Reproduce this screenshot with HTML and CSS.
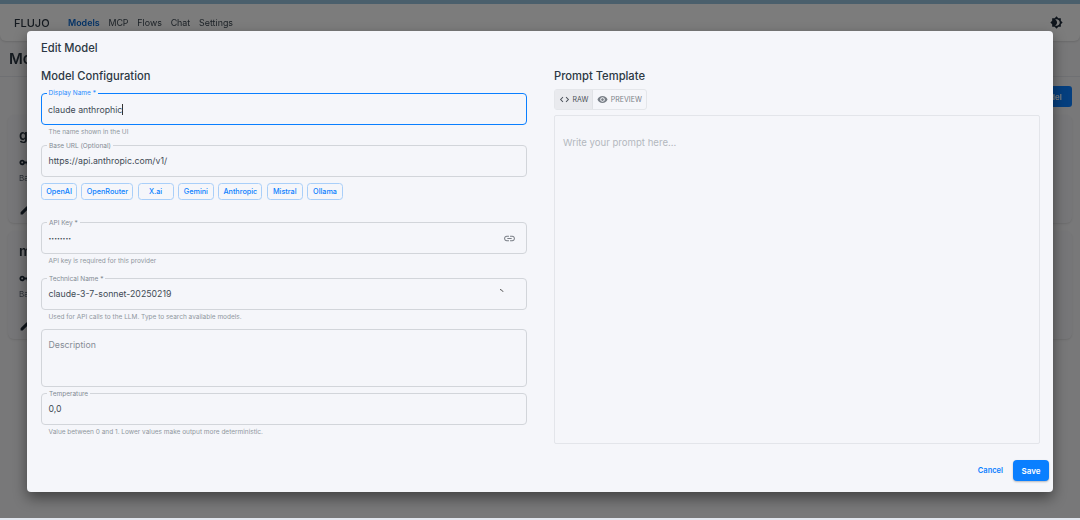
FILE: index.html
```html
<!DOCTYPE html>
<html lang="en">
<head>
<meta charset="utf-8">
<title>Edit Model</title>
<link rel="stylesheet" href="styles.css">
</head>
<body>
<div class="topbar"></div>
<div class="stage">
  <div class="page">
    <header class="appbar">
      <span class="brand">FLUJO</span>
      <nav class="nav">
        <a class="nav-item active">Models</a>
        <a class="nav-item">MCP</a>
        <a class="nav-item">Flows</a>
        <a class="nav-item">Chat</a>
        <a class="nav-item">Settings</a>
      </nav>
      <svg class="theme-icon" viewBox="0 0 24 24"><path d="M20 8.69V4h-4.69L12 .69 8.69 4H4v4.69L.69 12 4 15.31V20h4.69L12 23.31 15.31 20H20v-4.69L23.31 12 20 8.69zM12 18c-.89 0-1.74-.2-2.5-.55C11.56 16.5 13 14.42 13 12s-1.44-4.5-3.5-5.45C10.26 6.2 11.11 6 12 6c3.31 0 6 2.69 6 6s-2.69 6-6 6z"/></svg>
    </header>
    <div class="page-head">
      <h1 class="page-title">Models</h1>
    </div>
    <div class="page-actions"><button class="add-btn">Add Model</button></div>
    <section class="card">
      <h2 class="card-title">groq</h2>
      <svg class="card-key" viewBox="0 0 24 24"><path d="M12.65 10C11.83 7.67 9.61 6 7 6c-3.31 0-6 2.69-6 6s2.69 6 6 6c2.61 0 4.83-1.67 5.65-4H17v4h4v-4h2v-4H12.65zM7 14c-1.1 0-2-.9-2-2s.9-2 2-2 2 .9 2 2-.9 2-2 2z"/></svg>
      <p class="card-text">Base URL</p>
      <svg class="card-edit" viewBox="0 0 24 24"><path d="M3 17.25V21h3.75L17.81 9.94l-3.75-3.75L3 17.25zM20.71 7.04c.39-.39.39-1.02 0-1.41l-2.34-2.34c-.39-.39-1.02-.39-1.41 0l-1.83 1.83 3.75 3.75 1.83-1.83z"/></svg>
    </section>
    <section class="card">
      <h2 class="card-title">mistral</h2>
      <svg class="card-key" viewBox="0 0 24 24"><path d="M12.65 10C11.83 7.67 9.61 6 7 6c-3.31 0-6 2.69-6 6s2.69 6 6 6c2.61 0 4.83-1.67 5.65-4H17v4h4v-4h2v-4H12.65zM7 14c-1.1 0-2-.9-2-2s.9-2 2-2 2 .9 2 2-.9 2-2 2z"/></svg>
      <p class="card-text">Base URL</p>
      <svg class="card-edit" viewBox="0 0 24 24"><path d="M3 17.25V21h3.75L17.81 9.94l-3.75-3.75L3 17.25zM20.71 7.04c.39-.39.39-1.02 0-1.41l-2.34-2.34c-.39-.39-1.02-.39-1.41 0l-1.83 1.83 3.75 3.75 1.83-1.83z"/></svg>
    </section>
  </div>

  <div class="scrim"></div>

  <div class="modal">
    <h2 class="modal-title">Edit Model</h2>
    <div class="modal-body">
      <div class="col">
        <h3 class="section-title">Model Configuration</h3>
        <div class="field field-focus gap-first">
          <label class="field-label">Display Name *</label>
          <span class="field-value">claude anthrophic<i class="caret"></i></span>
        </div>
        <p class="help">The name shown in the UI</p>
        <div class="field gap-help">
          <label class="field-label">Base URL (Optional)</label>
          <span class="field-value">https://api.anthropic.com/v1/</span>
        </div>
        <div class="providers">
          <button class="provider">OpenAI</button>
          <button class="provider">OpenRouter</button>
          <button class="provider">X.ai</button>
          <button class="provider">Gemini</button>
          <button class="provider">Anthropic</button>
          <button class="provider">Mistral</button>
          <button class="provider">Ollama</button>
        </div>
        <div class="field gap-providers">
          <label class="field-label">API Key *</label>
          <span class="field-value field-dots">••••••••</span>
          <svg class="link-icon" viewBox="0 0 24 24"><path d="M3.9 12c0-1.71 1.39-3.1 3.1-3.1h4V7H7c-2.76 0-5 2.24-5 5s2.24 5 5 5h4v-1.9H7c-1.71 0-3.1-1.39-3.1-3.1zM8 13h8v-2H8v2zm9-6h-4v1.9h4c1.71 0 3.1 1.39 3.1 3.1s-1.39 3.1-3.1 3.1h-4V17h4c2.76 0 5-2.24 5-5s-2.24-5-5-5z"/></svg>
        </div>
        <p class="help">API key is required for this provider</p>
        <div class="field gap-help-wide">
          <label class="field-label">Technical Name *</label>
          <span class="field-value">claude-3-7-sonnet-20250219</span>
          <svg class="tick-icon" viewBox="0 0 4 3"><path d="M0 0l1 .2L3.6 2.4 3 3 1 1.2 0 1z"/></svg>
        </div>
        <p class="help">Used for API calls to the LLM. Type to search available models.</p>
        <div class="field field-area gap-help-tight">
          <span class="field-value placeholder">Description</span>
        </div>
        <div class="field gap-field">
          <label class="field-label">Temperature</label>
          <span class="field-value">0,0</span>
        </div>
        <p class="help">Value between 0 and 1. Lower values make output more deterministic.</p>
      </div>
      <div class="col">
        <h3 class="section-title">Prompt Template</h3>
        <div class="toggle">
          <button class="toggle-btn selected">
            <svg class="toggle-icon" viewBox="0 0 24 24"><path d="M9.4 16.6 4.8 12l4.6-4.6L8 6l-6 6 6 6 1.4-1.4zm5.2 0 4.6-4.6-4.6-4.6L16 6l6 6-6 6-1.4-1.4z"/></svg>RAW
          </button>
          <button class="toggle-btn">
            <svg class="toggle-icon" viewBox="0 0 24 24"><path d="M12 4.5C7 4.5 2.73 7.61 1 12c1.73 4.39 6 7.5 11 7.5s9.27-3.11 11-7.5c-1.73-4.39-6-7.5-11-7.5zM12 17c-2.76 0-5-2.24-5-5s2.24-5 5-5 5 2.24 5 5-2.24 5-5 5zm0-8c-1.66 0-3 1.34-3 3s1.34 3 3 3 3-1.34 3-3-1.34-3-3-3z"/></svg>PREVIEW
          </button>
        </div>
        <div class="editor">Write your prompt here...</div>
      </div>
    </div>
    <footer class="modal-footer">
      <button class="cancel">Cancel</button>
      <button class="save">Save</button>
    </footer>
  </div>
</div>
<div class="bottomstrip"></div>
</body>
</html>
```

FILE: styles.css
```css
* { box-sizing: border-box; }
html, body { height: 100%; }
body {
  margin: 0;
  width: 1080px;
  height: 520px;
  overflow: hidden;
  display: flex;
  flex-direction: column;
  font-family: Inter, "Liberation Sans", sans-serif;
  background: #f5f6fa;
  color: #2a3540;
}
button { font-family: inherit; cursor: pointer; }
h1, h2, h3, p { margin: 0; }

.topbar { height: 4px; background: #4a5f6c; flex: none; }
.bottomstrip { height: 2px; background: #e2e7ef; flex: none; }
.stage { position: relative; flex: 1; min-height: 0; overflow: hidden; }

.page { height: 100%; background: #f0f0f2; filter: blur(.4px); }
.appbar {
  height: 37px;
  display: flex;
  align-items: center;
  padding: 0 17px 0 14px;
  background: #f8f8f8;
  border-radius: 0 0 6px 6px;
  box-shadow: 0 1px 2px rgba(0,0,0,.12);
}
.brand { font-size: 11px; font-weight: 500; width: 54px; }
.nav { display: flex; gap: 8.8px; flex: 1; font-size: 8.9px; }
.nav-item { color: #3b4650; }
.nav-item.active { color: #0a66cc; font-weight: 600; }
.theme-icon { width: 13px; height: 13px; fill: #1e2a38; }

.page-head {
  height: 36px;
  padding-left: 9px;
  display: flex;
  align-items: center;
  border-bottom: 1px solid #dfe1e6;
}
.page-title { font-size: 15px; font-weight: 600; }
.page-actions { height: 38px; padding: 9px 8px 0 0; display: flex; justify-content: flex-end; }
.add-btn {
  height: 21px;
  width: 62px;
  border: 0;
  border-radius: 3px;
  background: #0a7fff;
  color: #fff;
  font-size: 8px;
  font-weight: 600;
  padding: 0;
}
.card {
  height: 108px;
  margin: 0 8px 8px;
  padding: 12px 11px;
  border-radius: 6px;
  background: #ededf0;
  box-shadow: 0 1px 2px rgba(0,0,0,.1);
}
.card-title { font-size: 14px; font-weight: 600; line-height: 16px; }
.card-key { display: block; width: 11px; height: 11px; margin-top: 13.5px; fill: #1e2a38; }
.card-text { font-size: 8px; line-height: 10px; color: #5a6570; margin-top: 5.5px; }
.card-edit { display: block; width: 13px; height: 13px; margin-top: 19.5px; fill: #1e2a38; }

.scrim { position: absolute; inset: 0; background: rgba(0,0,0,.5); }

.modal {
  position: absolute;
  left: 27px;
  top: 27px;
  width: 1026px;
  height: 461px;
  padding: 10px 13px 11px 14px;
  display: flex;
  flex-direction: column;
  background: #f5f6fa;
  border-radius: 4px;
  box-shadow: 0 6px 14px rgba(0,0,0,.45);
}
.modal-title { font-size: 11.2px; font-weight: 500; line-height: 15px; color: #2c3843; }
.modal-body {
  flex: 1;
  min-height: 0;
  margin-top: 13px;
  display: grid;
  grid-template-columns: 1fr 1fr;
  column-gap: 27px;
}
.col { display: flex; flex-direction: column; min-width: 0; }
.section-title { font-size: 11.2px; font-weight: 500; line-height: 14px; color: #2c3843; }

.field {
  position: relative;
  flex: none;
  height: 32px;
  display: flex;
  align-items: center;
  padding: 0 6.5px;
  border: 1px solid #d2d5da;
  border-radius: 4px;
}
.field-area { height: 58px; align-items: flex-start; padding-top: 10px; }
.field-focus { border: 1.5px solid #0a7fff; padding-left: 6px; }
.gap-first { margin-top: 10px; }
.gap-help { margin-top: 9px; }
.gap-help-tight { margin-top: 8px; }
.gap-help-wide { margin-top: 13px; }
.gap-field { margin-top: 6px; }
.gap-providers { margin-top: 22px; }

.field-label {
  position: absolute;
  left: 5px;
  top: -4.5px;
  padding: 0 2px;
  font-size: 6.5px;
  line-height: 9px;
  color: #828a93;
  background: #f5f6fa;
}
.field-focus .field-label { left: 4.5px; color: #2a8cff; top: -5px; }
.field-value { font-size: 8.75px; color: #414b55; white-space: nowrap; }
.field-dots { font-size: 5px; }
.placeholder { color: #858c95; }
.caret { display: inline-block; width: 1px; height: 11px; margin-bottom: -2px; background: #333; }
.help {
  flex: none;
  padding: 2px 0 0 7.5px;
  height: 11px;
  font-size: 6.5px;
  line-height: 10px;
  color: #8f969e;
  white-space: nowrap;
}
.link-icon { position: absolute; right: 10px; top: 9px; width: 13px; height: 13px; fill: #7a7f86; }
.tick-icon { position: absolute; right: 22px; top: 10px; width: 4px; height: 3px; fill: #555; }

.providers { display: flex; gap: 4.3px; margin-top: 6px; }
.provider {
  height: 17px;
  min-width: 36px;
  padding: 0 4.2px;
  border: 1px solid #a9cff9;
  border-radius: 3.5px;
  background: transparent;
  color: #0a7fff;
  font-size: 7.25px;
  font-weight: 500;
}

.toggle { display: flex; margin-top: 6px; height: 21px; align-self: flex-start; flex: none; border: 1px solid #e4e6ea; border-radius: 3px; }
.toggle-btn {
  display: flex;
  align-items: center;
  gap: 2.5px;
  padding: 0 4px;
  border: 0;
  background: transparent;
  color: #7a8088;
  font-size: 7px;
}
.toggle-btn.selected { background: #e9eaee; color: #4a5058; border-right: 1px solid #e0e2e6; }
.toggle-icon { width: 11px; height: 11px; fill: currentColor; }
.editor {
  flex: 1;
  margin-top: 5px;
  padding: 20px 8px;
  border: 1px solid #e3e5ea;
  border-radius: 2px;
  font-size: 9.6px;
  line-height: 13px;
  color: #b3b8be;
}

.modal-footer { flex: none; display: flex; justify-content: flex-end; align-items: center; margin: 16px -9px 0 0; height: 21px; }
.cancel {
  border: 0;
  padding: 0;
  margin-right: 10px;
  background: transparent;
  color: #0a7fff;
  font-size: 7.5px;
  font-weight: 600;
}
.save {
  width: 36px;
  height: 21px;
  border: 0;
  border-radius: 4px;
  background: #0a7fff;
  color: #fff;
  font-size: 8px;
  font-weight: 600;
  box-shadow: 0 1px 2px rgba(0,0,0,.25);
}
```
